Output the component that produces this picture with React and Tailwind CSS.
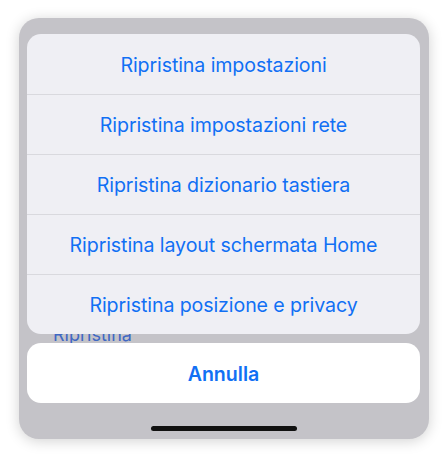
import React from "react";

const actions = [
    "Ripristina impostazioni",
    "Ripristina impostazioni rete",
    "Ripristina dizionario tastiera",
    "Ripristina layout schermata Home",
    "Ripristina posizione e privacy",
];

export default function App() {
    return (
        <div
            className="w-[448px] h-[457px] bg-white pt-[18px] pl-[19px]"
            style={{ fontFamily: "Inter, 'Noto Sans', sans-serif" }}
        >
            <div className="relative w-[410px] h-[421px] rounded-[20px] bg-[#c4c3c8] shadow-[0_2px_14px_rgba(0,0,0,0.18)] px-[8px] pt-[16px] flex flex-col">
                {/* list text peeking from behind the sheet */}
                <div className="absolute left-[34px] top-[303px] text-[18px] text-[#3f68c4]">
                    Ripristina
                </div>

                <div className="relative z-10 w-[393px] rounded-[14px] bg-[#efeff4] overflow-hidden">
                    {actions.map((label, i) => (
                        <div
                            key={label}
                            className={
                                "h-[60px] pt-[3px] flex items-center justify-center text-[19.6px] text-[#1170f4] tracking-[-0.1px]" +
                                (i > 0 ? " border-t border-[#d9d9de]" : "")
                            }
                        >
                            {label}
                        </div>
                    ))}
                </div>

                <div className="relative z-10 mt-[9px] w-[393px] h-[60px] pt-[3px] rounded-[14px] bg-white flex items-center justify-center text-[19.6px] font-semibold text-[#1170f4]">
                    Annulla
                </div>

                <div className="mt-[23px] mx-auto w-[146px] h-[5px] rounded-full bg-[#111]" />
            </div>
        </div>
    );
}
